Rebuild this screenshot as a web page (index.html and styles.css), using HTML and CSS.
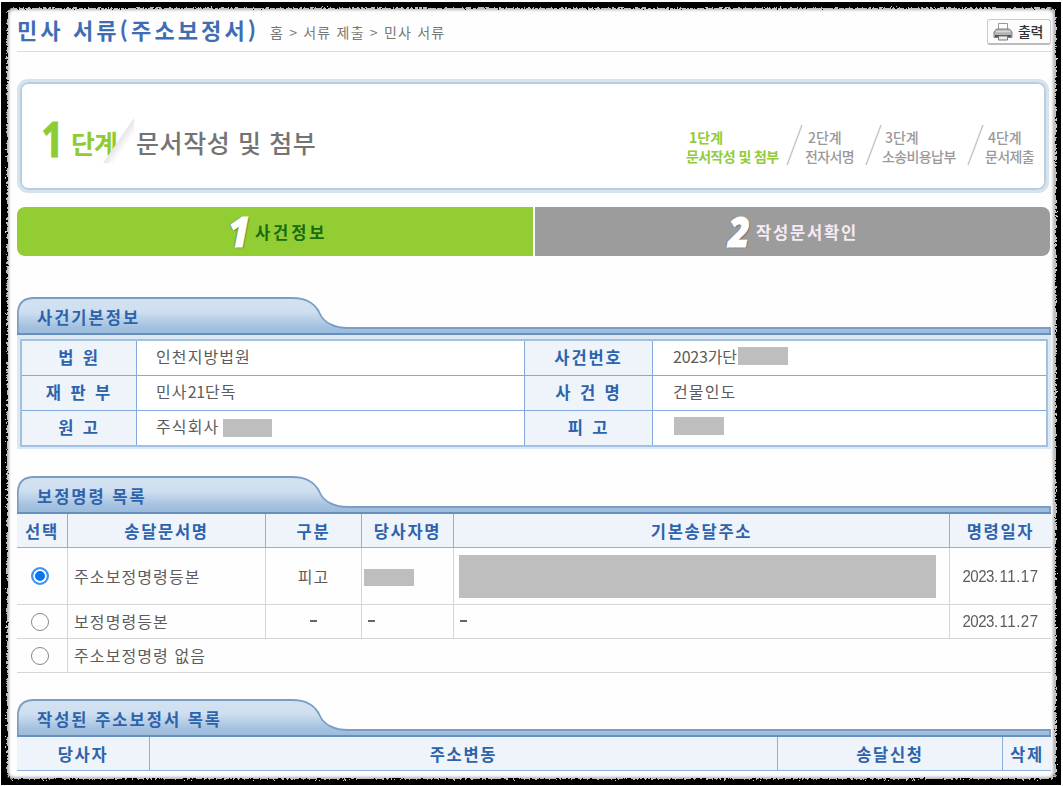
FILE: index.html
```html
<!DOCTYPE html>
<html lang="ko">
<head>
<meta charset="utf-8">
<title>민사 서류(주소보정서)</title>
<link rel="stylesheet" href="styles.css">
</head>
<body>
<svg class="defs" width="0" height="0">
  <defs>
    <linearGradient id="tabFill" x1="0" y1="0" x2="0" y2="1">
      <stop offset="0" stop-color="#d3e2f1"/><stop offset=".38" stop-color="#cfdff0"/><stop offset=".8" stop-color="#a4c1df"/><stop offset="1" stop-color="#9bbbdc"/>
    </linearGradient>
    <symbol id="tab" viewBox="0 0 1034 38">
      <path d="M.8 37V17Q1 1 17 1H275C292 1 299 8 303 17C307 26 318 31 331 31H1033V37Z" fill="url(#tabFill)" stroke="#7b9dc4" stroke-width="1.8"/>
      <path d="M0 37H1034" stroke="#6890be" stroke-width="1.8"/>
    </symbol>
  </defs>
</svg>
<div class="page">
  <header class="head">
    <h1 class="title">민사 서류(주소보정서)</h1>
    <nav class="crumbs">홈 &gt; 서류 제출 &gt; 민사 서류</nav>
    <button class="print" type="button">
      <svg width="20" height="20" viewBox="0 0 20 20">
        <path d="M5.5 8V1.5H14.5V8" fill="#fff" stroke="#999" stroke-width="1"/>
        <path d="M3.5 7H16.5L19 10V15.5H1V10Z" fill="#b4b4b4" stroke="#808080"/>
        <path d="M3 9.5H17" stroke="#d8d8d8" stroke-width="1.5"/>
        <path d="M2 14H18" stroke="#555" stroke-width="2"/>
        <path d="M5.5 14H14.5V18H5.5Z" fill="#eee" stroke="#777"/>
      </svg>
      <span class="print-label">출력</span>
    </button>
  </header>

  <section class="stage">
    <div class="stage-now">
      <span class="stage-no">1</span><span class="stage-word">단계</span>
      <svg class="fold" width="34" height="48" viewBox="0 0 34 48">
        <defs><linearGradient id="foldFill" gradientUnits="userSpaceOnUse" x1="14" y1="22" x2="24" y2="29"><stop offset="0" stop-color="#dedede"/><stop offset="1" stop-color="#fff"/></linearGradient></defs>
        <path d="M1 46L32 1V46Z" fill="url(#foldFill)"/>
      </svg>
      <span class="stage-name">문서작성 및 첨부</span>
    </div>
    <ol class="flow">
      <li class="flow-item on w1"><b>1단계</b><span>문서작성 및 첨부</span></li>
      <li class="slash"><svg width="17" height="42"><path d="M1 41L16 1" stroke="#c4c4c4" stroke-width="1.4"/></svg></li>
      <li class="flow-item w2"><b>2단계</b><span>전자서명</span></li>
      <li class="slash"><svg width="17" height="42"><path d="M1 41L16 1" stroke="#c4c4c4" stroke-width="1.4"/></svg></li>
      <li class="flow-item w3"><b>3단계</b><span>소송비용납부</span></li>
      <li class="slash"><svg width="17" height="42"><path d="M1 41L16 1" stroke="#c4c4c4" stroke-width="1.4"/></svg></li>
      <li class="flow-item w4"><b>4단계</b><span>문서제출</span></li>
    </ol>
  </section>

  <div class="steps">
    <div class="step active"><span class="step-no">1</span><span class="step-label">사건정보</span></div>
    <div class="step"><span class="step-no">2</span><span class="step-label">작성문서확인</span></div>
  </div>

  <section class="panel case">
    <div class="tab"><svg width="1034" height="38"><use href="#tab"/></svg><h2 class="tab-title">사건기본정보</h2></div>
    <div class="case-frame">
      <div class="case-grid">
        <div class="th">법 원</div><div class="td">인천지방법원</div><div class="th">사건번호</div><div class="td right"><span class="tight">2023가단</span><i class="mask m1"></i></div>
        <div class="th">재 판 부</div><div class="td">민사<span class="tight">21</span>단독</div><div class="th">사 건 명</div><div class="td right">건물인도</div>
        <div class="th">원 고</div><div class="td">주식회사<i class="mask m2"></i></div><div class="th">피 고</div><div class="td right"><i class="mask m3"></i></div>
      </div>
    </div>
  </section>

  <section class="panel orders">
    <div class="tab"><svg width="1034" height="38"><use href="#tab"/></svg><h2 class="tab-title">보정명령 목록</h2></div>
    <div class="row row-head">
      <div>선택</div><div>송달문서명</div><div>구분</div><div>당사자명</div><div>기본송달주소</div><div>명령일자</div>
    </div>
    <div class="row row-tall">
      <div class="c pick"><i class="radio checked"></i></div><div class="name">주소보정명령등본</div><div class="c">피고</div><div class="masked"><i class="mask m4"></i></div><div class="addr"><i class="mask m5"></i></div><div class="c date"><span>2023.<span class="day">11.17</span></span></div>
    </div>
    <div class="row">
      <div class="c pick"><i class="radio"></i></div><div class="name">보정명령등본</div><div class="c"><i class="dash"></i></div><div class="name"><i class="dash"></i></div><div class="name"><i class="dash"></i></div><div class="c date"><span>2023.<span class="day">11.27</span></span></div>
    </div>
    <div class="row">
      <div class="c pick"><i class="radio"></i></div><div class="name rest">주소보정명령 없음</div>
    </div>
  </section>

  <section class="panel written">
    <div class="tab"><svg width="1034" height="38"><use href="#tab"/></svg><h2 class="tab-title">작성된 주소보정서 목록</h2></div>
    <div class="row row-head row-written">
      <div>당사자</div><div>주소변동</div><div>송달신청</div><div>삭제</div>
    </div>
  </section>

  <svg class="edge" width="1063" height="786" viewBox="0 0 1063 786">
    <defs>
      <filter id="rough" x="0" y="0" width="1063" height="786" filterUnits="userSpaceOnUse">
        <feTurbulence type="fractalNoise" baseFrequency=".45" numOctaves="2" seed="4" result="n"/>
        <feDisplacementMap in="SourceGraphic" in2="n" scale="6" xChannelSelector="R" yChannelSelector="G" result="d"/>
        <feGaussianBlur in="d" stdDeviation=".6"/>
      </filter>
      <filter id="soft"><feGaussianBlur stdDeviation="1.4"/></filter>
    </defs>
    <rect x="7" y="8" width="1048" height="771" rx="7" fill="none" stroke="#999" stroke-width="3" filter="url(#soft)"/>
    <path filter="url(#rough)" fill-rule="evenodd" d="M-10-10H1073V796H-10ZM13 8H1049Q1056 8 1056 14V773Q1056 779 1049 779H13Q7 779 7 773V14Q7 8 13 8Z"/>
    <path fill="#fff" fill-rule="evenodd" d="M0 0H1063V786H0ZM1 2V785H1061V2Z"/>
  </svg>
</div>
</body>
</html>
```
FILE: styles.css
```css
* { box-sizing: border-box; }
body { margin: 0; background: #fff; font-family: "Noto Sans CJK KR", sans-serif; color: #5c5c5c; }
.defs { position: absolute; }
.page { position: relative; width: 1063px; height: 786px; padding: 9px 12px 0 17px; overflow: hidden; background: #fefefe; }
.edge { position: absolute; left: 0; top: 0; pointer-events: none; }

.head { display: flex; align-items: center; width: 1034px; height: 43px; border-bottom: 1px solid #dcdcdc; }
.title { margin: 0; width: 253px; font-size: 22px; line-height: 40px; padding-bottom: 2px; font-weight: 700; letter-spacing: 3.1px; color: #3f6db3; white-space: nowrap; }
.crumbs { font-size: 14px; letter-spacing: 1.2px; color: #777; white-space: nowrap; padding-top: 4px; }
.print { display: flex; align-items: center; gap: 5px; margin-left: auto; margin-top: 4px; width: 64px; height: 26px; padding: 0 0 0 5px; background: #fcfcfc; border: 1px solid #ccc; border-bottom: 2px solid #bbb; border-radius: 3px; font-family: inherit; }
.print-label { font-size: 14px; line-height: 20px; font-weight: 500; color: #333; white-space: nowrap; padding-bottom: 2px; letter-spacing: -.4px; }

.stage { display: flex; justify-content: space-between; width: 1032px; height: 114px; margin-top: 27px; background: #fff; border: 3px solid #d6e3ed; border-radius: 11px; box-shadow: inset 0 0 0 2px #b9cee0; }
.stage-now { display: flex; align-items: center; padding: 12px 0 0 21px; color: #8fcc33; white-space: nowrap; }
.stage-no { width: 30px; font: bold 49px/50px "Open Sans", sans-serif; transform: translateY(-4px) scaleX(.82); transform-origin: left; -webkit-text-stroke: .8px #8fcc33; }
.stage-word { width: 45px; font-size: 26px; font-weight: 700; letter-spacing: -1px; }
.fold { margin: -2px 0 0 -14px; position: relative; }
.stage-name { font-size: 25px; font-weight: 500; letter-spacing: .6px; color: #747474; }
.flow { display: flex; list-style: none; margin: 0; padding: 42px 4px 0 0; font-size: 14px; line-height: 19px; color: #999; }
.flow-item { display: flex; flex-direction: column; padding-top: 4px; white-space: nowrap; letter-spacing: -.6px; }
.flow-item b { font-weight: 500; padding-left: 3px; letter-spacing: 0; }
.flow-item span { font-weight: 500; }
.flow-item.on b, .flow-item.on span { font-weight: 700; }
.on { color: #92cc3a; }
.slash { width: 17px; }
.w1 { width: 100px; } .w2 { width: 60px; margin-left: 2px; } .w3 { width: 85px; margin-left: 0; } .w4 { width: 57px; margin-left: 1px; }

.steps { display: grid; grid-template-columns: 516px 515px; gap: 2px; height: 49px; margin-top: 14px; }
.step { display: flex; align-items: center; background: #9c9c9c; color: #f6eaf4; padding-left: 193px; border-radius: 0 8px 8px 0; }
.step.active { background: #92cd33; color: #176c12; padding-left: 211px; border-radius: 8px 0 0 8px; }
.step-no { width: 28px; font: italic 800 42px/48px "Open Sans", sans-serif; color: #fff; text-shadow: 1px 1px 1px #666, -1px 0 1px #777; transform: translateY(-1px) scaleX(.9); transform-origin: left; -webkit-text-stroke: .8px #fff; }
.active .step-no { width: 27px; text-shadow: 1px 1px 1px #4f7220, -1px 0 1px #5b7b30; }
.step-label { font-size: 16.5px; font-weight: 700; letter-spacing: 2.9px; white-space: nowrap; }
.step:not(.active) .step-label { letter-spacing: 1.8px; }

.tab { display: grid; width: 1034px; height: 38px; }
.tab svg, .tab-title { grid-area: 1 / 1; display: block; }
.tab-title { margin: 0; padding: 8px 0 0 20px; font-size: 16.5px; line-height: 24px; font-weight: 700; letter-spacing: 2px; color: #2d63ab; white-space: nowrap; }

.case { margin-top: 41px; }
.case-frame { width: 1034px; height: 114px; padding: 4px 3px 2px; background: #dce8f2; }
.case-grid { display: grid; grid-template-columns: 114px 387px 127px 1fr; grid-template-rows: repeat(3, 34px); gap: 1px; height: 108px; background: #84a9dc; border: 2px solid #a3bfe2; }
.th { display: flex; align-items: center; justify-content: center; background: #eff4fb; color: #2d63ab; font-size: 16.5px; font-weight: 700; letter-spacing: 1.9px; word-spacing: 1px; line-height: 20px; white-space: nowrap; padding-bottom: 3px; }
.td { display: flex; align-items: center; background: #fff; padding: 0 0 4px 19px; font-size: 16px; line-height: 20px; letter-spacing: 1.1px; white-space: nowrap; }
.td.right { padding-left: 20px; }
.tight { letter-spacing: -.2px; }
.mask { display: block; background: #bebebe; }
.m1 { width: 50px; height: 18px; margin-left: 1px; } .m2 { width: 49px; height: 18px; margin: 4px 0 0 4px; } .m3 { width: 50px; height: 18px; margin-left: 1px; }
.m4 { width: 50px; height: 17px; margin-top: 2px; } .m5 { width: 477px; height: 43px; }

.orders { margin-top: 27px; }
.row { display: grid; grid-template-columns: 51px 198px 96px 92px 496px 101px; width: 1034px; height: 34px; border-bottom: 1px solid #d6d6d6; font-size: 16px; line-height: 20px; letter-spacing: 1.1px; }
.row > div { display: flex; align-items: center; border-right: 1px solid #d6d6d6; white-space: nowrap; padding-bottom: 1px; }
.row > div.masked, .row > div.addr, .row > div.pick { padding-bottom: 0; }
.row > div:last-child { border-right: 0; }
.row > .c { justify-content: center; }
.row > .pick { padding-right: 5px; }
.name { padding-left: 6px; }
.rest { grid-column: 2 / -1; }
.masked { padding-left: 2px; }
.addr { padding-left: 5px; }
.row-tall { height: 57px; }
.row-head { height: 34px; background: #eff4fb; border-bottom: 1px solid #8fb0dc; color: #2d63ab; font-size: 16.5px; font-weight: 700; letter-spacing: 1.7px; }
.row.row-head > div { justify-content: center; border-right-color: #8fb0dc; padding: 1px 0 0; }
.row-written { grid-template-columns: 133px 628px 225px 48px; }
.row > .date { font-family: "Liberation Sans", sans-serif; font-size: 16px; letter-spacing: -.5px; padding-top: 2px; }
.date > span { transform: scaleX(.94); }
.day { letter-spacing: .5px; margin-left: 2px; }
.dash { width: 7px; height: 1.5px; background: #666; }
.radio { width: 18px; height: 18px; border: 1.5px solid #888; border-radius: 50%; background: #fff; }
.checked { border: 2px solid #3f94f5; box-shadow: inset 0 0 0 2px #fff; background: #0878f5; }
.written { margin-top: 26px; }
```
